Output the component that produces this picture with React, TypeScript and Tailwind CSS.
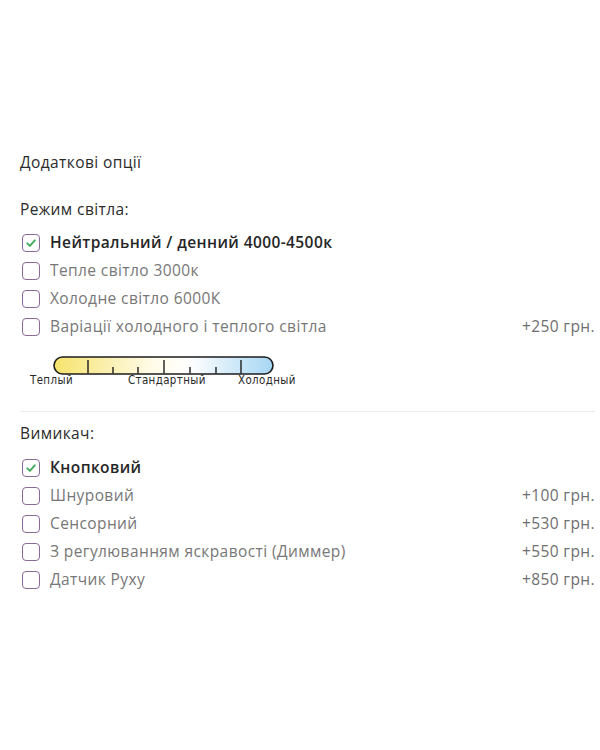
import { ReactNode } from 'react';

type Option = {
  label: string;
  price?: string;
  checked?: boolean;
};

const lightModes: Option[] = [
  { label: 'Нейтральний / денний 4000-4500к', checked: true },
  { label: 'Тепле світло 3000к' },
  { label: 'Холодне світло 6000К' },
  { label: 'Варіації холодного і теплого світла', price: '+250 грн.' },
];

const switches: Option[] = [
  { label: 'Кнопковий', checked: true },
  { label: 'Шнуровий', price: '+100 грн.' },
  { label: 'Сенсорний', price: '+530 грн.' },
  { label: 'З регулюванням яскравості (Диммер)', price: '+550 грн.' },
  { label: 'Датчик Руху', price: '+850 грн.' },
];

const CheckBox = ({ checked }: { checked?: boolean }) => (
  <span className="ml-[2px] flex h-[18px] w-[18px] shrink-0 items-center justify-center rounded-[4px] border-[1.5px] border-[#8a6a99] bg-white">
    {checked && (
      <svg viewBox="0 0 12 12" className="h-[12px] w-[12px]">
        <polyline
          points="2.3,6.4 4.9,8.9 9.8,3.4"
          fill="none"
          stroke="#45ad5c"
          strokeWidth="2"
          strokeLinecap="round"
          strokeLinejoin="round"
        />
      </svg>
    )}
  </span>
);

const OptionRow = ({ label, price, checked }: Option) => (
  <label className="flex h-[28px] items-center gap-[10px] pt-[1px]">
    <CheckBox checked={checked} />
    <span className={checked ? 'font-semibold text-[#262626]' : 'text-[#777777]'}>{label}</span>
    {price && <span className="ml-auto text-[#6f6f6f]">{price}</span>}
  </label>
);

const GroupTitle = ({ children, className }: { children: ReactNode; className?: string }) => (
  <div className={`h-[20px] leading-[20px] text-[#2b2b2b] ${className ?? ''}`}>{children}</div>
);

// colour temperature scale: warm yellow -> white -> cool blue
const TempScale = () => (
  <svg width="290" height="34" viewBox="0 0 290 34" className="mt-[15px] block">
    <defs>
      <linearGradient id="temp" x1="0" x2="1" y1="0" y2="0">
        <stop offset="0" stopColor="#f6e36c" />
        <stop offset="0.45" stopColor="#fffbe8" />
        <stop offset="0.62" stopColor="#ffffff" />
        <stop offset="1" stopColor="#a6d6f3" />
      </linearGradient>
    </defs>
    <rect x="34" y="2" width="219" height="17" rx="8.5" fill="url(#temp)" stroke="#1d1d1d" strokeWidth="1.6" />
    {[68, 144, 221].map((x) => (
      <line key={x} x1={x} x2={x} y1="5" y2="18.5" stroke="#1d1d1d" strokeWidth="1.4" />
    ))}
    {[93, 118, 170, 196].map((x) => (
      <line key={x} x1={x} x2={x} y1="12" y2="18.5" stroke="#1d1d1d" strokeWidth="1.4" />
    ))}
    <g fontFamily="'DejaVu Sans Condensed', 'DejaVu Sans', sans-serif" fontSize="11.4" fill="#2a2a2a">
      <text x="10" y="29">Теплый</text>
      <text x="108" y="29">Стандартный</text>
      <text x="218" y="29">Холодный</text>
    </g>
  </svg>
);

export default function App() {
  return (
    <div
      className="min-h-[750px] w-[600px] bg-white pl-[20px] pr-[5px] pt-[152px] text-[15.5px] tracking-[0.4px]"
      style={{ fontFamily: "'Open Sans', 'Noto Sans', sans-serif" }}
    >
      <GroupTitle>Додаткові опції</GroupTitle>

      <GroupTitle className="mt-[27px]">Режим світла:</GroupTitle>
      <div className="mt-[9px] flex flex-col">
        {lightModes.map((o) => (
          <OptionRow key={o.label} {...o} />
        ))}
      </div>

      <TempScale />

      <div className="mt-[22px] h-px bg-[#ececec]" />

      <GroupTitle className="mt-[11px]">Вимикач:</GroupTitle>
      <div className="mt-[10px] flex flex-col">
        {switches.map((o) => (
          <OptionRow key={o.label} {...o} />
        ))}
      </div>
    </div>
  );
}
